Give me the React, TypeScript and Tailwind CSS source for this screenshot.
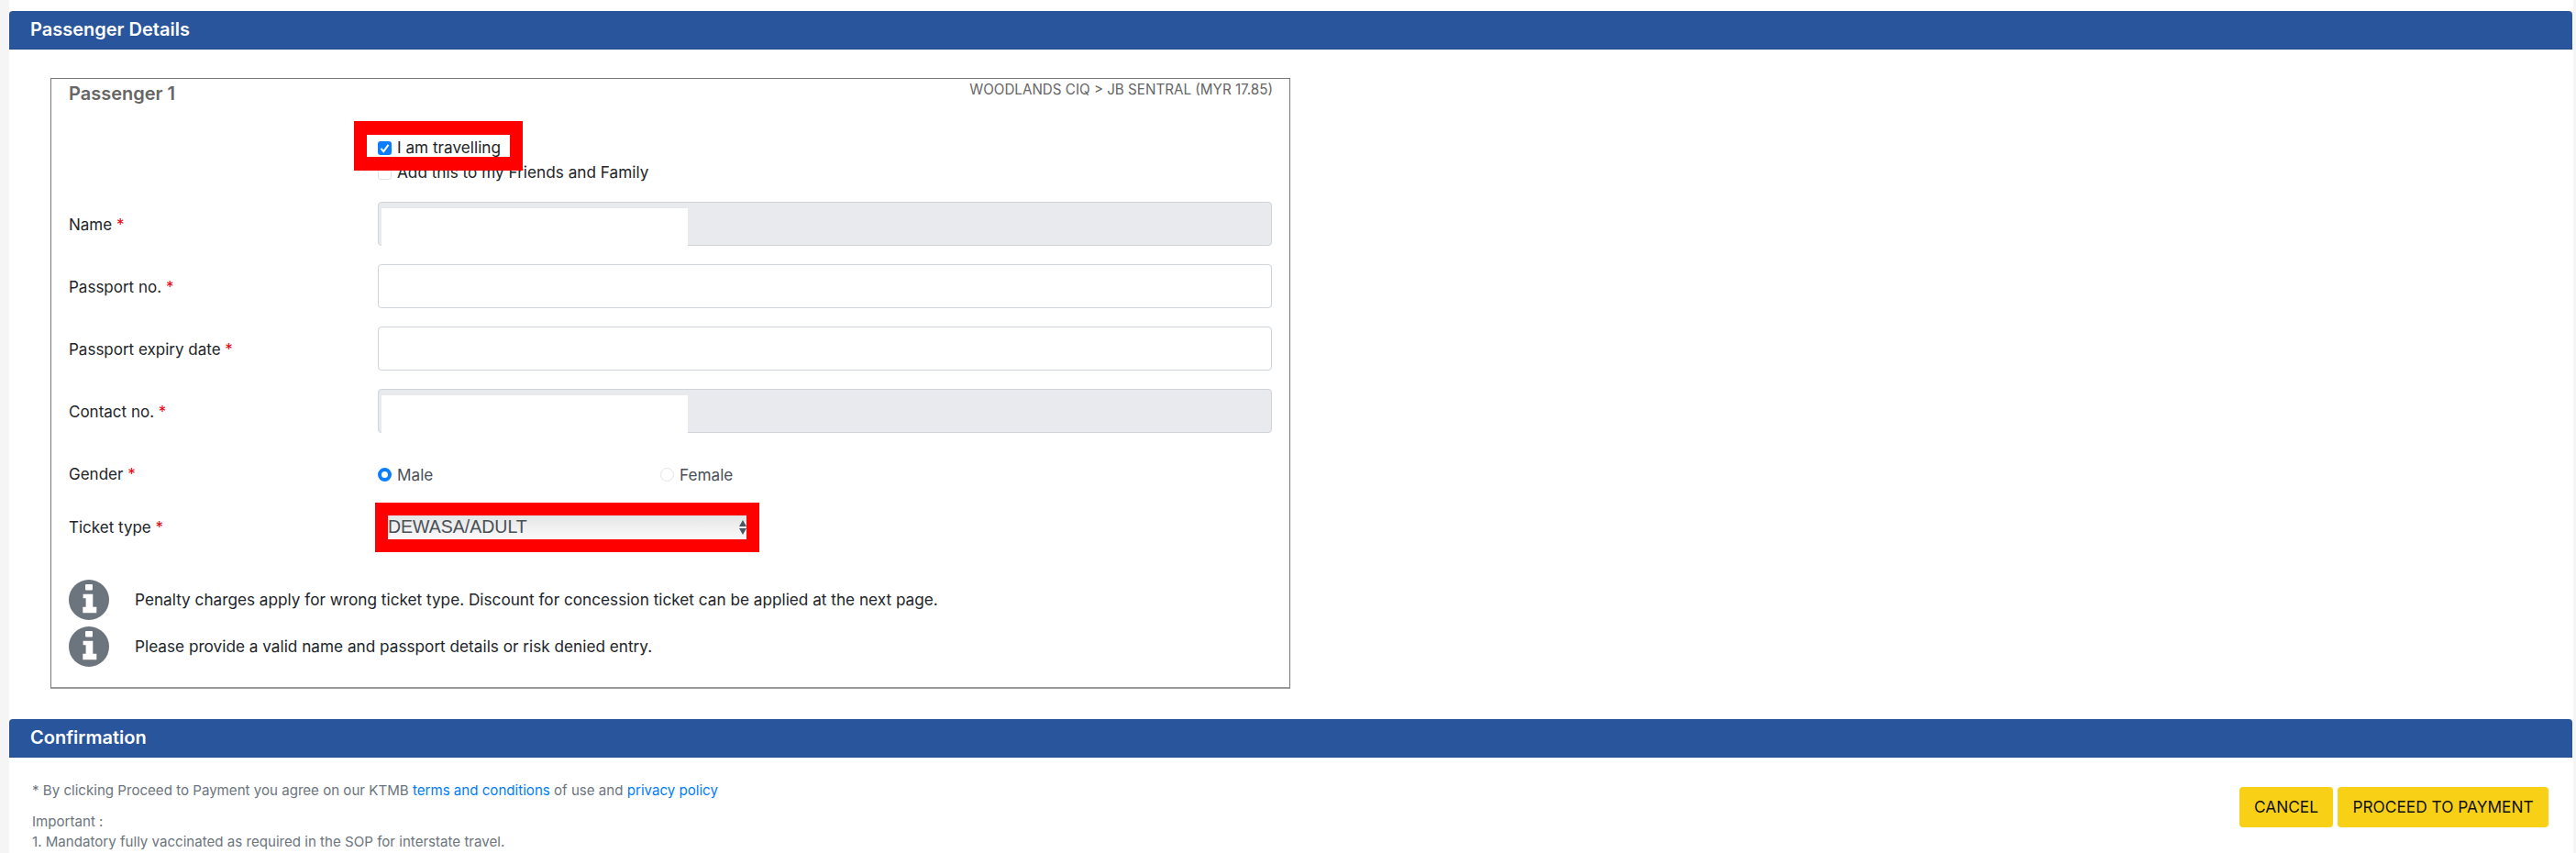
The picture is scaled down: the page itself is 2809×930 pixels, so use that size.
import React from 'react'

const font = { fontFamily: 'Inter, "Noto Sans", sans-serif' }

const InfoIcon: React.FC = () => (
  <svg viewBox="0 0 44 44" className="w-[44px] h-[44px] shrink-0">
    <circle cx="22" cy="22" r="22" fill="#6c757d" />
    <rect x="18" y="5" width="8" height="6.5" rx="1" fill="#fff" />
    <path d="M15.6 15.7H26.3V29.7H30.3V36.3H15.3V29.7H18.6V20.3H15.6Z" fill="#fff" />
  </svg>
)

const Label: React.FC<{ text: string; shift?: boolean }> = ({ text, shift }) => (
  <div className={`w-[337px] shrink-0 text-[17px] text-[#212529] ${shift ? 'mt-[3px]' : ''}`}>
    {text} <span className="text-[#e3000f]">*</span>
  </div>
)

const SectionBar: React.FC<{ title: string }> = ({ title }) => (
  <div className="h-[42px] flex items-center pl-[23px] pb-[2px] bg-[#28559c] rounded-t-[4px] border-b border-[#1f4a8c] text-white text-[20px] font-semibold">
    {title}
  </div>
)

const InputRow: React.FC<{ label: string; disabled?: boolean }> = ({ label, disabled }) => (
  <div className="flex items-center h-[48px] mb-[20px]">
    <Label text={label} shift />
    <div className="relative w-[975px] h-[48px]">
      <input
        readOnly
        className={`w-full h-full rounded-[4px] border border-[#ced4da] ${disabled ? 'bg-[#e9eaee]' : 'bg-white'}`}
      />
      {/* patch hiding personal data in the screenshot */}
      {disabled && <div className="absolute left-[4px] top-[7px] bottom-0 w-[334px] bg-white" />}
    </div>
  </div>
)

const Notice: React.FC<{ text: string }> = ({ text }) => (
  <div className="flex items-center h-[44px] mb-[7px]">
    <InfoIcon />
    <div className="ml-[28px] text-[17.2px] text-[#212529]">{text}</div>
  </div>
)

const Check: React.FC<{ checked?: boolean }> = ({ checked }) =>
  checked ? (
    <span className="w-[15px] h-[15px] rounded-[3px] bg-[#0b7dff] flex items-center justify-center shrink-0">
      <svg viewBox="0 0 16 16" className="w-[13px] h-[13px]" fill="none" stroke="#fff" strokeWidth="2.4">
        <path d="M3 8.5l3.5 4L13 3.5" />
      </svg>
    </span>
  ) : (
    <span className="w-[15px] h-[15px] rounded-[3px] bg-white border border-[#e4e4e4] shrink-0" />
  )

export default function App() {
  return (
    <div style={font} className="min-h-[930px] bg-[#f5f5f5] pl-[10px] pr-[3px]">
      <div className="bg-white h-[930px] overflow-hidden pt-[12px] pr-px">
        <SectionBar title="Passenger Details" />

        <div className="ml-[45px] mt-[31px] w-[1352px] h-[666px] border border-[#777] border-b-2 border-b-[#999] pl-[19px] pr-[18px]">
          <div className="flex justify-between items-start h-[55px]">
            <div className="text-[20px] font-semibold text-[#666] mt-[1px]">Passenger 1</div>
            <div className="text-[15.2px] text-[#666] mt-[1px]">WOODLANDS CIQ &gt; JB SENTRAL (MYR 17.85)</div>
          </div>

          <div className="relative ml-[337px] h-[79px] pt-[3px]">
            <div className="flex items-center gap-[6px] h-[27px] pt-[7px] text-[17.2px] text-[#212529]">
              <Check checked />
              <span>I am travelling</span>
            </div>
            <div className="flex items-center gap-[6px] h-[27px] pt-[7px] text-[17.2px] text-[#212529]">
              <Check />
              <span>Add this to my Friends and Family</span>
            </div>
            {/* red annotation frame */}
            <div className="absolute left-[-26px] top-[-9px] w-[184px] h-[54px] border-x-[14px] border-y-[15px] border-[#ff0000]" />
          </div>

          <InputRow label="Name" disabled />
          <InputRow label="Passport no." />
          <InputRow label="Passport expiry date" />
          <InputRow label="Contact no." disabled />

          <div className="flex items-center h-[30px] mt-[31px]">
            <Label text="Gender" />
            <div className="flex items-center w-[308px] text-[17.2px] text-[#495057]">
              <span className="w-[15px] h-[15px] rounded-full border-[4px] border-[#0b7dff] bg-white mr-[6px]" />
              Male
            </div>
            <div className="flex items-center text-[17.2px] text-[#495057]">
              <span className="w-[15px] h-[15px] rounded-full border border-[#e4e4e4] bg-white mr-[6px]" />
              Female
            </div>
          </div>

          <div className="flex items-center h-[25px] mt-[29px]">
            <Label text="Ticket type" shift />
            <div className="relative">
              <div className="w-[391px] ml-[11px] h-[25px] flex items-center justify-between bg-gradient-to-b from-[#e4e4e4] via-[#f0f0f0] to-[#f8f8f8]">
                <span className="text-[19.5px] text-[#495057]" style={{ fontFamily: '"Liberation Sans", sans-serif' }}>DEWASA/ADULT</span>
                <svg viewBox="0 0 8 18" className="w-[8px] h-[18px]" fill="#4b5563">
                  <path d="M4 1l4 7H0zM0 10h8l-4 7z" />
                </svg>
              </div>
              {/* red annotation frame */}
              <div className="absolute left-[-3px] top-[-14px] w-[419px] h-[54px] border-[14px] border-[#ff0000]" />
            </div>
          </div>

          <div className="mt-[45px]">
            <Notice text="Penalty charges apply for wrong ticket type. Discount for concession ticket can be applied at the next page." />
            <Notice text="Please provide a valid name and passport details or risk denied entry." />
          </div>
        </div>

        <div className="mt-[33px]">
          <SectionBar title="Confirmation" />
        </div>

        <div className="flex justify-between pl-[25px] pr-[26px]">
          <div className="text-[15.1px] text-[#6c757d] pt-[25px]">
            <div>
              * By clicking Proceed to Payment you agree on our KTMB{' '}
              <span className="text-[#007bff]">terms and conditions</span> of use and{' '}
              <span className="text-[#007bff]">privacy policy</span>
            </div>
            <div className="mt-[11px]">Important :</div>
            <div>1. Mandatory fully vaccinated as required in the SOP for interstate travel.</div>
          </div>
          <div className="flex gap-[5px] pt-[32px]">
            <button className="w-[102px] h-[44px] rounded-[4px] bg-[#f8d116] text-[17.3px] text-[#111]">CANCEL</button>
            <button className="w-[230px] h-[44px] rounded-[4px] bg-[#f8d116] text-[17.3px] text-[#111]">PROCEED TO PAYMENT</button>
          </div>
        </div>
      </div>
    </div>
  )
}
